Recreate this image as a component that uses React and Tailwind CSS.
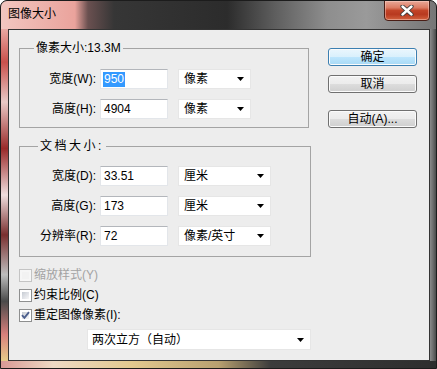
import React from "react";

const FONT = "font-['Liberation_Sans','Noto_Sans_CJK_SC',sans-serif]";

function Arrow() {
  return (
    <svg width="7" height="4" viewBox="0 0 7 4" className="shrink-0">
      <path d="M0 0H7L3.5 4Z" fill="#000" />
    </svg>
  );
}

function Field({ children }) {
  return (
    <div className="w-[68px] h-[20px] bg-white border border-[#e3e6ea] border-t-[#b3b6bb] flex items-center pl-[3px] text-[12px] leading-[14px] text-black">
      {children}
    </div>
  );
}

function Select({ wide, children }) {
  return (
    <div
      className={`${wide ? "w-[93px]" : "w-[73px]"} h-[20px] ml-[10px] bg-white border border-[#e6e6e6] flex items-center justify-between pl-[5px] pr-[6px] text-[12px] leading-[14px] text-black`}
    >
      <span>{children}</span>
      <Arrow />
    </div>
  );
}

function Row({ label, value, unit, wide, first }) {
  return (
    <div className={`flex items-center h-[20px] ${first ? "" : "mt-[10px]"}`}>
      <div className="w-[76px] text-right pr-0 text-[12px] leading-[14px] text-black">{label}</div>
      <div className="ml-[4px]">
        <Field>{value}</Field>
      </div>
      <Select wide={wide}>{unit}</Select>
    </div>
  );
}

function Check({ checked, disabled }) {
  return (
    <div
      className={`relative w-[13px] h-[13px] border ${
        disabled ? "border-[#c4c4c4] bg-[#f6f6f6]" : "border-[#8e8f8f] bg-white"
      } p-[2px] shrink-0`}
    >
      <div
        className={`w-full h-full ${
          disabled
            ? "bg-[#f2f2f2]"
            : "bg-[linear-gradient(135deg,#c6cbd2_0%,#e4e6ea_60%,#f7f7f7_100%)]"
        }`}
      />
      {checked && (
        <svg width="13" height="13" viewBox="0 0 13 13" className="absolute -left-[1px] -top-[1px]">
          <path d="M3 6.2L5.4 8.8L10 3.2" stroke="#4c5f8d" strokeWidth="1.9" fill="none" />
        </svg>
      )}
    </div>
  );
}

function Btn({ children, primary, className = "" }) {
  return (
    <div
      className={`w-[89px] h-[18px] rounded-[3px] border flex items-center justify-center text-[12px] leading-[14px] text-black shadow-[inset_0_0_0_1px_#fbfbfb] ${
        primary
          ? "border-[#3c7fb1] bg-[linear-gradient(to_bottom,#eaf6fd_0%,#d9f0fc_50%,#bee6fd_50%,#a7d9f5_100%)]"
          : "border-[#707070] bg-[linear-gradient(to_bottom,#f2f2f2_0%,#ebebeb_50%,#dddddd_50%,#cfcfcf_100%)]"
      } ${className}`}
    >
      {children}
    </div>
  );
}

export default function App() {
  return (
    <div
      className={`${FONT} w-[437px] h-[369px] border border-[#1c1c1c] rounded-t-[7px] overflow-hidden flex flex-col bg-[#3a3a3a]`}
    >
      {/* title bar */}
      <div className="h-[28px] shrink-0 flex justify-between bg-[linear-gradient(to_right,#f2c6c0_0%,#eaa39c_17%,#6a5050_20%,#363636_26%,#2c2c2c_52%,#5e5e5e_63%,#8e8e8e_75%,#9a9a9a_84%,#767676_100%)]">
        <div className="pl-[7px] pt-[6px] text-[12px] leading-[14px] text-black">图像大小</div>
        <div className="mr-[6px] -mt-[1px] w-[46px] h-[21px] rounded-b-[4px] border border-[#4a1e16] flex items-center justify-center bg-[linear-gradient(to_bottom,#e9a898_0%,#dc7c64_35%,#c24428_50%,#b8391f_70%,#d2623f_100%)] shadow-[inset_0_0_0_1px_rgba(255,220,210,0.45)]">
          <svg width="14" height="11" viewBox="0 0 14 11">
            <path d="M2.5 1.5L11.5 9.5M11.5 1.5L2.5 9.5" stroke="#3a3a3a" strokeWidth="4.2" strokeLinecap="round" />
            <path d="M2.5 1.5L11.5 9.5M11.5 1.5L2.5 9.5" stroke="#ffffff" strokeWidth="2.4" strokeLinecap="round" />
          </svg>
        </div>
      </div>

      <div className="flex h-[332px] shrink-0">
        {/* left frame */}
        <div className="w-[7px] shrink-0 bg-[linear-gradient(to_bottom,#e8a8a2_0%,#c9504c_10%,#e9c9c6_22%,#9a2a2a_36%,#f0dede_50%,#7a3030_62%,#bdbdbd_74%,#4a4a4a_82%,#d8807c_92%,#e6cc8a_100%)]" />

        {/* client */}
        <div className="w-[422px] shrink-0 border border-[#343434] bg-[#ededed] flex">
          {/* left column */}
          <div className="ml-[10px] w-[292px] flex flex-col">
            {/* group 1 */}
            <div className="relative mt-[18px] w-[290px] h-[80px] border border-[#a4a4a4] pt-[20px]">
              <div className="absolute left-[14px] -top-[8px] px-[2px] bg-[#ededed] text-[12px] leading-[14px] text-black">
                像素大小:13.3M
              </div>
              <Row first label="宽度(W):" value={<span className="bg-[#3399ff] text-white leading-[15px] px-[1px] -ml-[1px]">950</span>} unit="像素" />
              <Row label="高度(H):" value="4904" unit="像素" />
            </div>

            {/* group 2 */}
            <div className="relative mt-[18px] w-[292px] h-[111px] border border-[#a4a4a4] pt-[19px]">
              <div className="absolute left-[18px] -top-[8px] px-[2px] bg-[#ededed] text-[12px] leading-[14px] tracking-[2.5px] text-black">
                文档大小:
              </div>
              <Row first wide label="宽度(D):" value="33.51" unit="厘米" />
              <Row wide label="高度(G):" value="173" unit="厘米" />
              <Row wide label="分辨率(R):" value="72" unit="像素/英寸" />
            </div>

            {/* checkboxes */}
            <div className="mt-[8px] flex flex-col">
              <div className="h-[20px] flex items-center">
                <Check disabled />
                <span className="ml-[2px] text-[12px] leading-[14px] text-[#a3a3a3]">缩放样式(Y)</span>
              </div>
              <div className="h-[20px] flex items-center">
                <Check />
                <span className="ml-[2px] text-[12px] leading-[14px] text-black">约束比例(C)</span>
              </div>
              <div className="h-[20px] flex items-center">
                <Check checked />
                <span className="ml-[2px] text-[12px] leading-[14px] text-black">重定图像像素(I):</span>
              </div>
            </div>

            <div className="mt-[4px] ml-[68px] w-[224px] h-[21px] bg-white border border-[#e6e6e6] flex items-center justify-between pl-[4px] pr-[6px] text-[12px] leading-[14px] text-black">
              <span>两次立方（自动）</span>
              <Arrow />
            </div>
          </div>

          {/* right column */}
          <div className="ml-[17px] mt-[18px] flex flex-col">
            <Btn primary>确定</Btn>
            <Btn className="mt-[9px]">取消</Btn>
            <Btn className="mt-[17px]">自动(A)...</Btn>
          </div>
        </div>

        {/* right frame */}
        <div className="w-[6px] shrink-0 bg-[linear-gradient(to_right,#8a8a8a_0%,#6c6c6c_50%,#4a4a4a_100%)]" />
      </div>

      {/* bottom frame */}
      <div className="flex-1 bg-[linear-gradient(to_right,#d89a96_0%,#eed9c4_12%,#e3c98f_30%,#b8a070_50%,#3c3c3c_62%,#2e2e2e_100%)]" />
    </div>
  );
}
